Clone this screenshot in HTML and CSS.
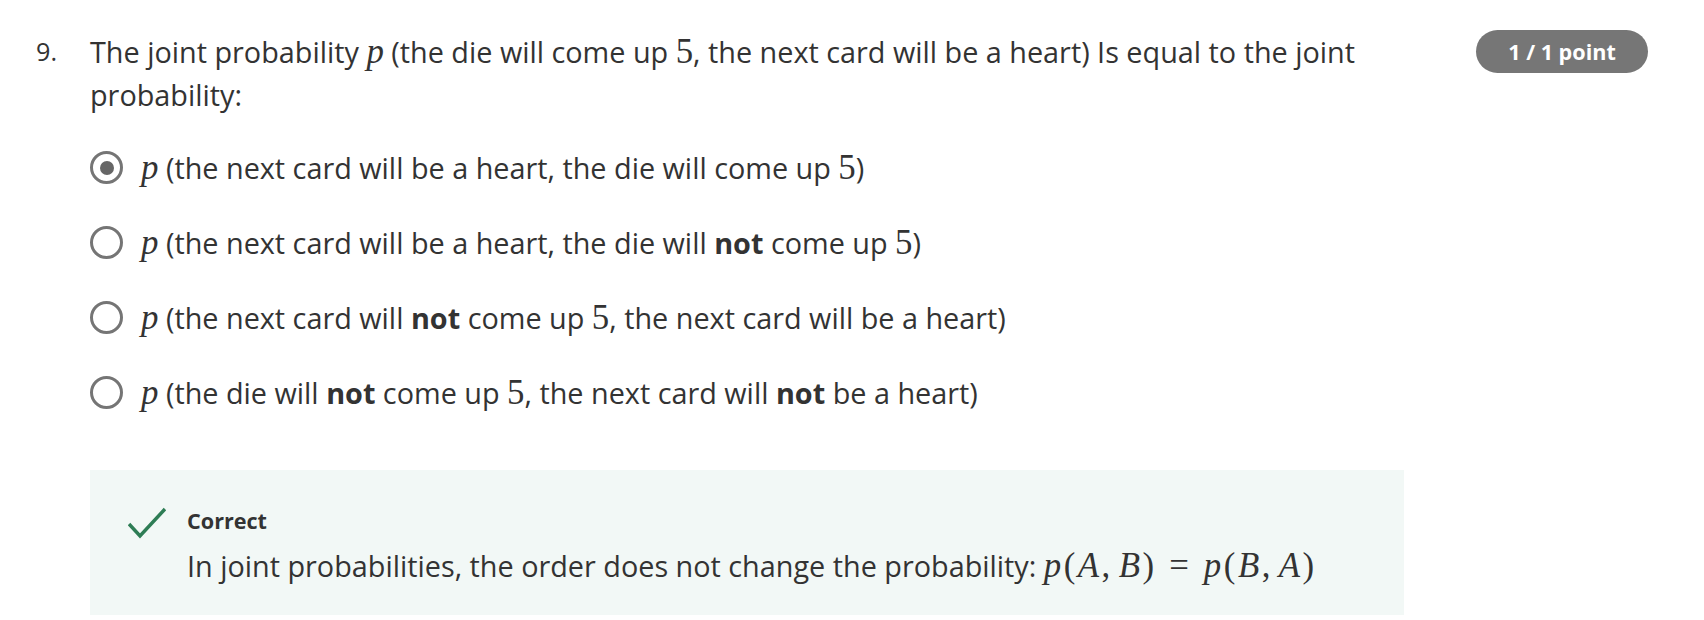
FILE: index.html
```html
<!DOCTYPE html>
<html lang="en">
<head>
<meta charset="utf-8">
<title>Question 9</title>
<link rel="stylesheet" href="styles.css">
</head>
<body>
<div class="question">
  <div class="qnum">9.</div>
  <div class="qmain">
    <div class="qtext">The joint probability <span class="mi">p</span> (the die will come up <span class="mn">5</span>, the next card will be a heart) Is equal to the joint probability:</div>
    <div class="options">
      <div class="option">
        <span class="radio checked"></span>
        <span class="label"><span class="mi">p</span> (the next card will be a heart, the die will come up <span class="mn">5</span>)</span>
      </div>
      <div class="option">
        <span class="radio"></span>
        <span class="label"><span class="mi">p</span> (the next card will be a heart, the die will <b>not</b> come up <span class="mn">5</span>)</span>
      </div>
      <div class="option">
        <span class="radio"></span>
        <span class="label"><span class="mi">p</span> (the next card will <b>not</b> come up <span class="mn">5</span>, the next card will be a heart)</span>
      </div>
      <div class="option">
        <span class="radio"></span>
        <span class="label"><span class="mi">p</span> (the die will <b>not</b> come up <span class="mn">5</span>, the next card will <b>not</b> be a heart)</span>
      </div>
    </div>
    <div class="feedback">
      <svg class="check" width="38" height="32" viewBox="0 0 38 32"><path d="M1 17 L12 29 L37 2" fill="none" stroke="#2e7d55" stroke-width="3.5"/></svg>
      <div class="fbody">
        <div class="ftitle">Correct</div>
        <div class="ftext">In joint probabilities, the order does not change the probability: <span class="math"><span class="mi">p</span>(<span class="mi">A</span>,<span class="thin"></span><span class="mi">B</span>)<span class="eq">=</span><span class="mi">p</span>(<span class="mi">B</span>,<span class="thin"></span><span class="mi">A</span>)</span></div>
      </div>
    </div>
  </div>
  <div class="badge">1 / 1 point</div>
</div>
</body>
</html>
```
FILE: styles.css
```css
html, body {
  margin: 0;
  padding: 0;
  background: #ffffff;
}
body {
  font-family: "Open Sans", "Liberation Sans", sans-serif;
  color: #333333;
}
.question {
  display: flex;
  align-items: flex-start;
  padding: 30px 0 0 36px;
}
.qnum {
  width: 54px;
  flex: none;
  font-size: 25.2px;
  line-height: 43.2px;
  color: #333333;
}
.qmain {
  width: 1314px;
  flex: none;
}
.qtext {
  font-size: 28.8px;
  line-height: 43.2px;
}
.mi {
  font-family: "Liberation Serif", "DejaVu Serif", serif;
  font-style: italic;
  font-size: 1.21em;
  line-height: 0;
}
.mn {
  font-family: "Liberation Serif", "DejaVu Serif", serif;
  font-size: 1.21em;
  line-height: 0;
}
.options {
  margin-top: 14px;
  display: flex;
  flex-direction: column;
}
.option {
  display: flex;
  align-items: center;
  gap: 18px;
  height: 75px;
}
.radio {
  width: 33px;
  height: 33px;
  box-sizing: border-box;
  border: 3.5px solid #757575;
  border-radius: 50%;
  flex: none;
  display: flex;
  align-items: center;
  justify-content: center;
}
.radio.checked::after {
  content: "";
  width: 14px;
  height: 14px;
  border-radius: 50%;
  background: #666666;
}
.label {
  font-size: 28.8px;
  line-height: 43.2px;
}
.label b {
  font-weight: 700;
}
.feedback {
  margin-top: 40px;
  background: #f2f8f6;
  display: flex;
  align-items: flex-start;
  gap: 21px;
  padding: 36px 38px 27px 38px;
}
.check {
  flex: none;
  margin-top: 1px;
}
.ftitle {
  font-size: 21.6px;
  font-weight: 700;
  line-height: 30px;
}
.ftext {
  font-size: 28.8px;
  line-height: 43.2px;
  margin-top: 8px;
}
.math {
  font-family: "Liberation Serif", "DejaVu Serif", serif;
  font-size: 1.21em;
  line-height: 0;
  letter-spacing: 2.5px;
}
.math .mi {
  font-size: 1em;
}
.thin {
  display: inline-block;
  width: 0.17em;
}
.eq {
  margin: 0 0.36em;
}
.badge {
  margin-left: 72px;
  flex: none;
  width: 172px;
  height: 43px;
  box-sizing: border-box;
  border-radius: 22px;
  background: #767676;
  color: #ffffff;
  font-weight: 700;
  font-size: 21.6px;
  display: flex;
  align-items: center;
  justify-content: center;
}
```
